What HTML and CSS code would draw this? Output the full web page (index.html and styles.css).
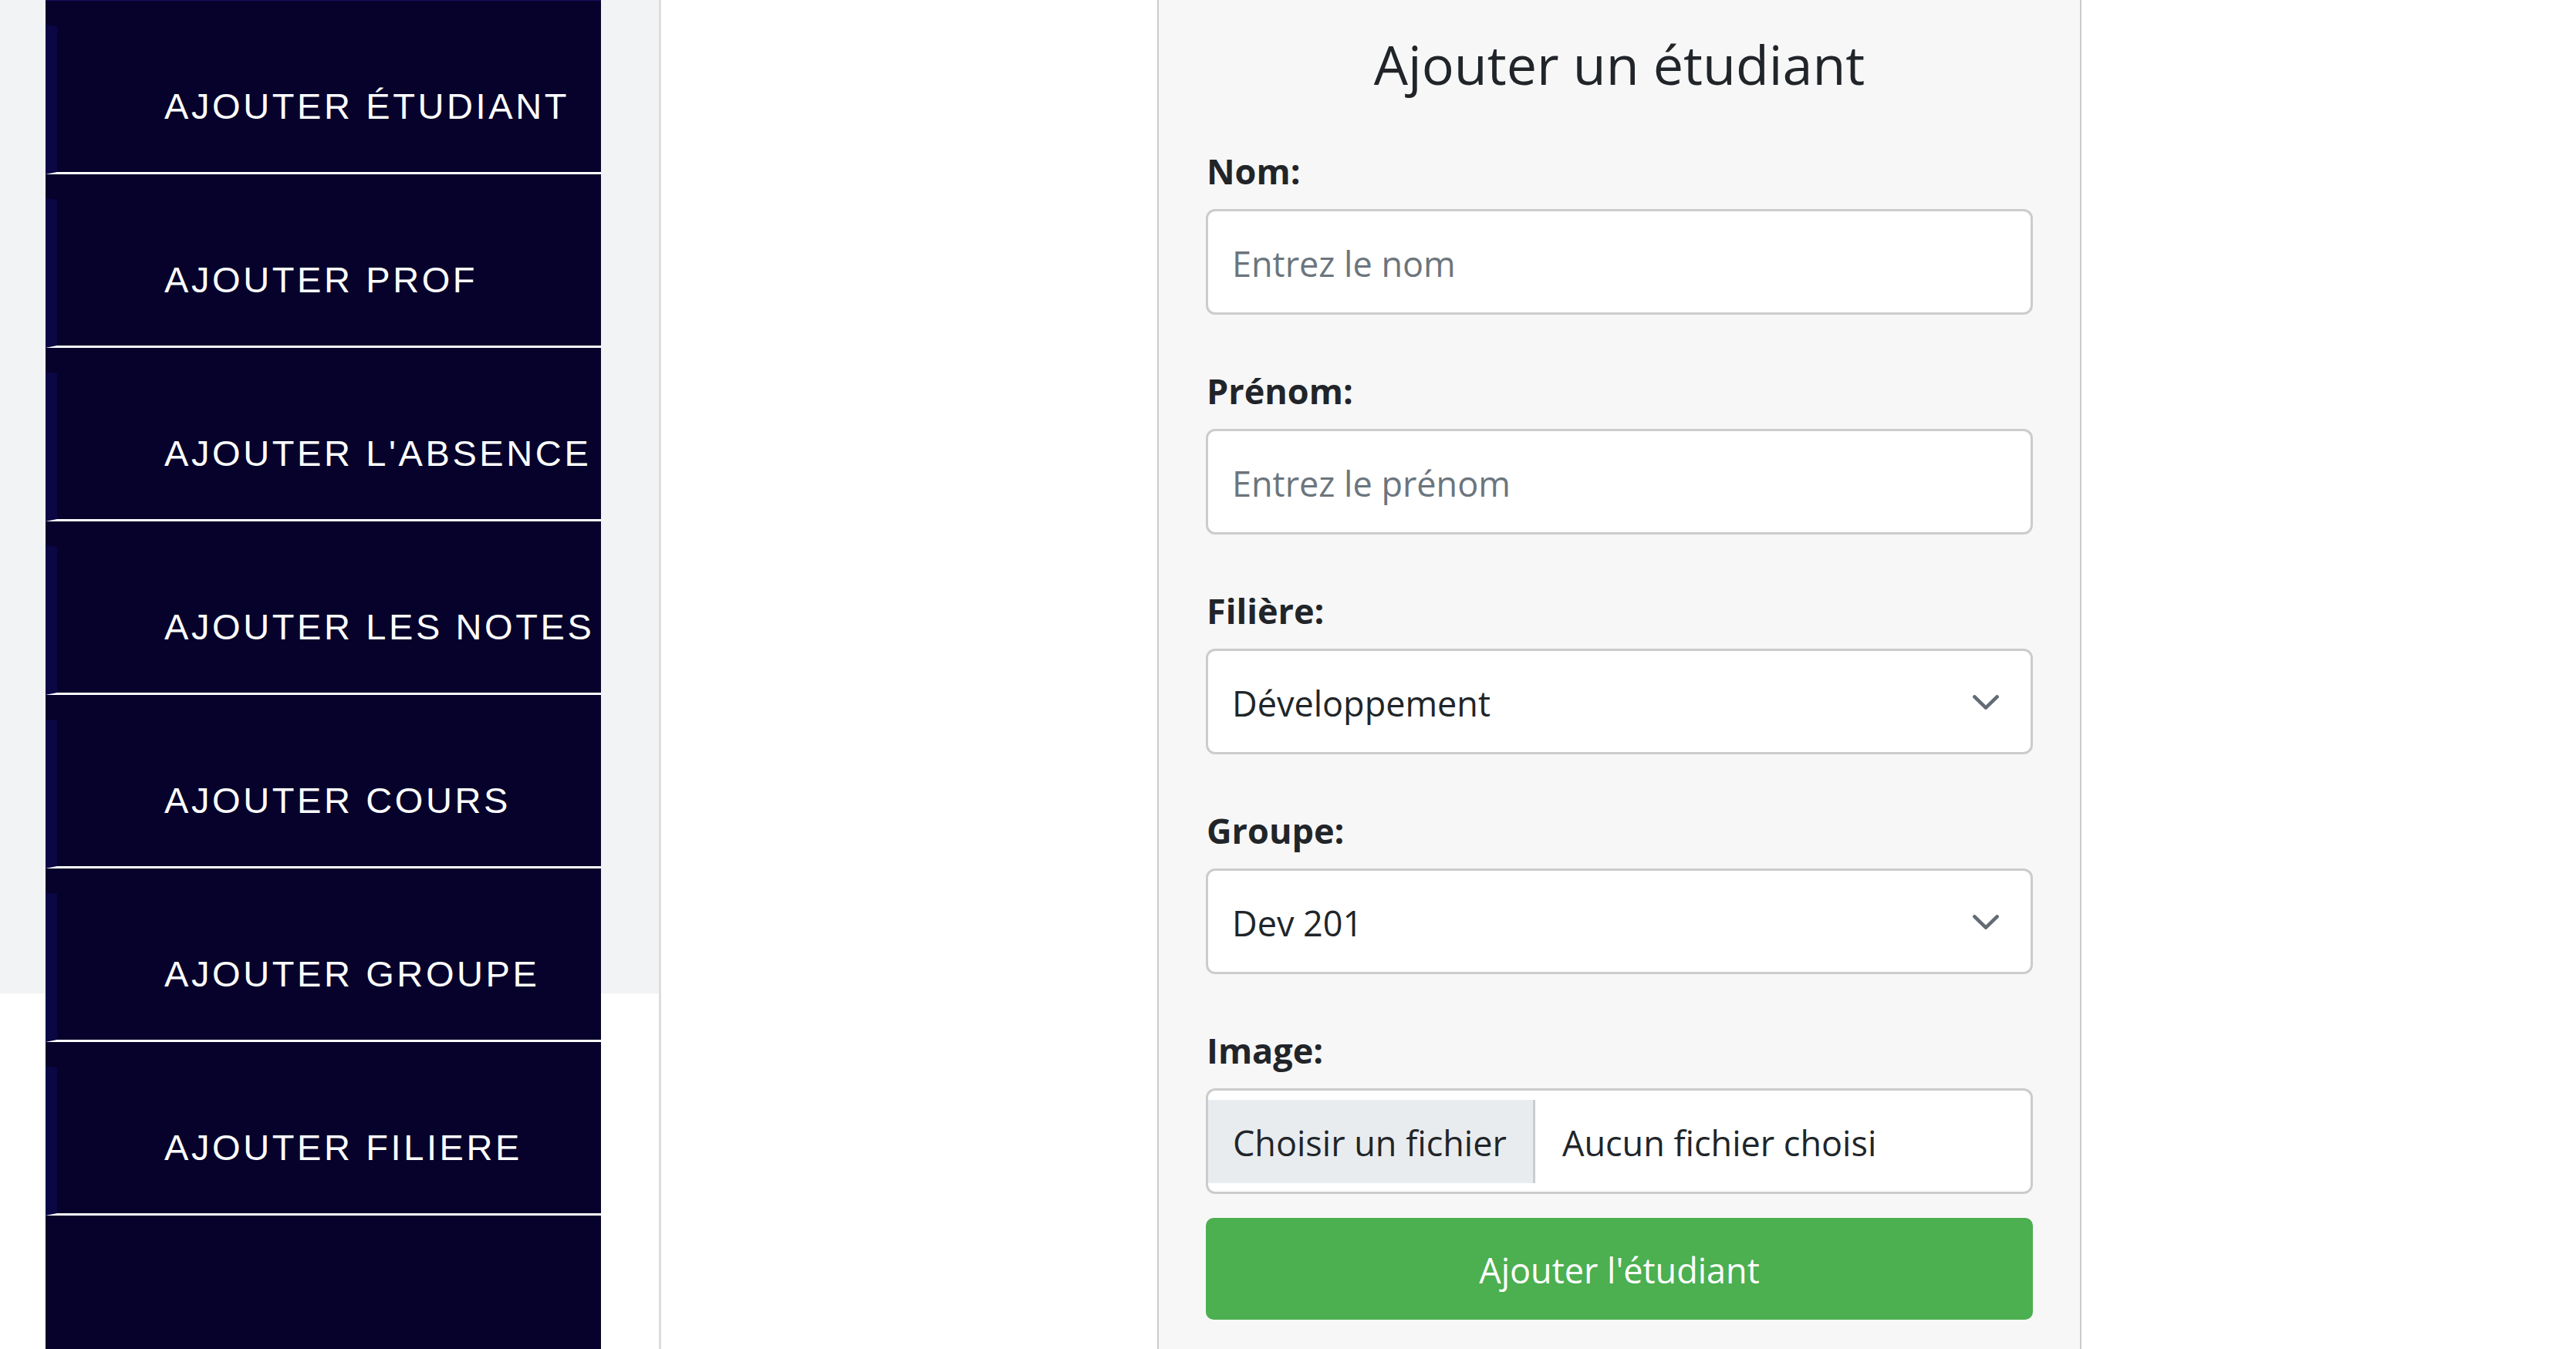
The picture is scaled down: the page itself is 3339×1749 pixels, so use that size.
FILE: index.html
```html
<!DOCTYPE html>
<html lang="fr">
<head>
<meta charset="utf-8">
<title>Ajouter un étudiant</title>
<link rel="stylesheet" href="styles.css">
</head>
<body>
<div class="page">
  <aside class="left">
    <nav class="sidebar">
      <ul class="menu">
        <li class="menu-item"><a class="menu-link" href="#">AJOUTER ÉTUDIANT</a></li>
        <li class="menu-item"><a class="menu-link" href="#">AJOUTER PROF</a></li>
        <li class="menu-item"><a class="menu-link" href="#">AJOUTER L'ABSENCE</a></li>
        <li class="menu-item"><a class="menu-link" href="#">AJOUTER LES NOTES</a></li>
        <li class="menu-item"><a class="menu-link" href="#">AJOUTER COURS</a></li>
        <li class="menu-item"><a class="menu-link" href="#">AJOUTER GROUPE</a></li>
        <li class="menu-item"><a class="menu-link" href="#">AJOUTER FILIERE</a></li>
      </ul>
    </nav>
  </aside>
  <main class="main">
    <form class="card">
      <h2 class="title">Ajouter un étudiant</h2>
      <div class="field">
        <label class="label" for="nom">Nom:</label>
        <input class="control" id="nom" type="text" placeholder="Entrez le nom">
      </div>
      <div class="field">
        <label class="label" for="prenom">Prénom:</label>
        <input class="control" id="prenom" type="text" placeholder="Entrez le prénom">
      </div>
      <div class="field">
        <label class="label" for="filiere">Filière:</label>
        <div class="select-wrap">
          <select class="control select" id="filiere">
            <option>Développement</option>
          </select>
          <svg class="chevron" width="34" height="19" viewBox="0 0 34 19"><polyline points="2.4,2.4 17,16.6 31.6,2.4" fill="none" stroke="#636b75" stroke-width="4.6" stroke-linecap="round" stroke-linejoin="round"/></svg>
        </div>
      </div>
      <div class="field">
        <label class="label" for="groupe">Groupe:</label>
        <div class="select-wrap">
          <select class="control select" id="groupe">
            <option>Dev 201</option>
          </select>
          <svg class="chevron" width="34" height="19" viewBox="0 0 34 19"><polyline points="2.4,2.4 17,16.6 31.6,2.4" fill="none" stroke="#636b75" stroke-width="4.6" stroke-linecap="round" stroke-linejoin="round"/></svg>
        </div>
      </div>
      <div class="field field-last">
        <span class="label">Image:</span>
        <div class="file">
          <span class="file-btn">Choisir un fichier</span>
          <span class="file-name">Aucun fichier choisi</span>
        </div>
      </div>
      <button class="submit" type="button">Ajouter l'étudiant</button>
    </form>
  </main>
</div>
</body>
</html>
```

FILE: styles.css
```css
* { box-sizing: border-box; }

html, body {
  margin: 0;
  padding: 0;
}

body {
  width: 3339px;
  height: 1749px;
  overflow: hidden;
  background: #ffffff;
  font-family: "Open Sans", "Noto Sans", sans-serif;
  color: #212529;
}

.page {
  display: flex;
  height: 1749px;
}

.left {
  flex: none;
  width: 857px;
  height: 100%;
  padding-left: 59px;
  border-right: 3px solid #dedede;
  background: linear-gradient(#f2f3f5 0, #f2f3f5 1288px, #ffffff 1288px);
}

.sidebar {
  width: 720px;
  height: 100%;
  background: #06022b;
  border-top: 1px solid #17115e;
}

.menu {
  list-style: none;
  margin: 0;
  padding: 0;
}

.menu-item {
  padding-top: 31px;
}

.menu-link {
  display: block;
  border-top: 2px solid #06022b;
  border-left: 15px solid #0b0644;
  border-bottom: 3px solid #ffffff;
  padding: 77px 0 58px 139px;
  font-family: "Liberation Sans", Arial, sans-serif;
  font-size: 47px;
  line-height: 54px;
  letter-spacing: 3.6px;
  color: #ffffff;
  text-decoration: none;
  white-space: nowrap;
}

.main {
  flex: 1;
  display: flex;
  justify-content: center;
  align-items: flex-start;
  padding-left: 2px;
}

.card {
  width: 1198px;
  height: 1800px;
  background: #f7f7f7;
  border: 2px solid #cccccc;
  border-top: none;
  padding: 41px 61px 0;
}

.title {
  margin: 0 0 62px;
  font-size: 70px;
  font-weight: 500;
  line-height: 84px;
  text-align: center;
  color: #212529;
}

.field {
  margin-bottom: 64px;
}

.field-last {
  margin-bottom: 31px;
}

.label {
  display: block;
  margin-bottom: 14px;
  padding-left: 1px;
  font-size: 45px;
  font-weight: 700;
  line-height: 70px;
  color: #212529;
}

.control {
  display: block;
  width: 100%;
  height: 137px;
  margin: 0;
  padding: 4px 31px 0;
  border: 3px solid #cccccc;
  border-radius: 12px;
  background: #ffffff;
  font-family: inherit;
  font-size: 45px;
  color: #212529;
  outline: none;
}

.control::placeholder {
  color: #6c757d;
  opacity: 1;
}

.select-wrap {
  position: relative;
}

.select {
  appearance: none;
  -webkit-appearance: none;
}

.chevron {
  position: absolute;
  right: 44px;
  top: 60px;
  pointer-events: none;
}

.file {
  display: flex;
  align-items: center;
  height: 137px;
  border: 3px solid #cccccc;
  border-radius: 12px;
  background: #ffffff;
  font-size: 45px;
}

.file-btn {
  display: flex;
  align-items: center;
  width: 424px;
  height: 108px;
  padding-left: 32px;
  padding-top: 4px;
  background: #e9ecef;
  border-right: 3px solid #cccccc;
  white-space: nowrap;
}

.file-name {
  padding-left: 35px;
  padding-top: 4px;
  white-space: nowrap;
}

.submit {
  display: block;
  width: 100%;
  height: 132px;
  padding-top: 4px;
  border: none;
  border-radius: 10px;
  background: #4caf50;
  color: #ffffff;
  font-family: inherit;
  font-size: 45px;
}
```
